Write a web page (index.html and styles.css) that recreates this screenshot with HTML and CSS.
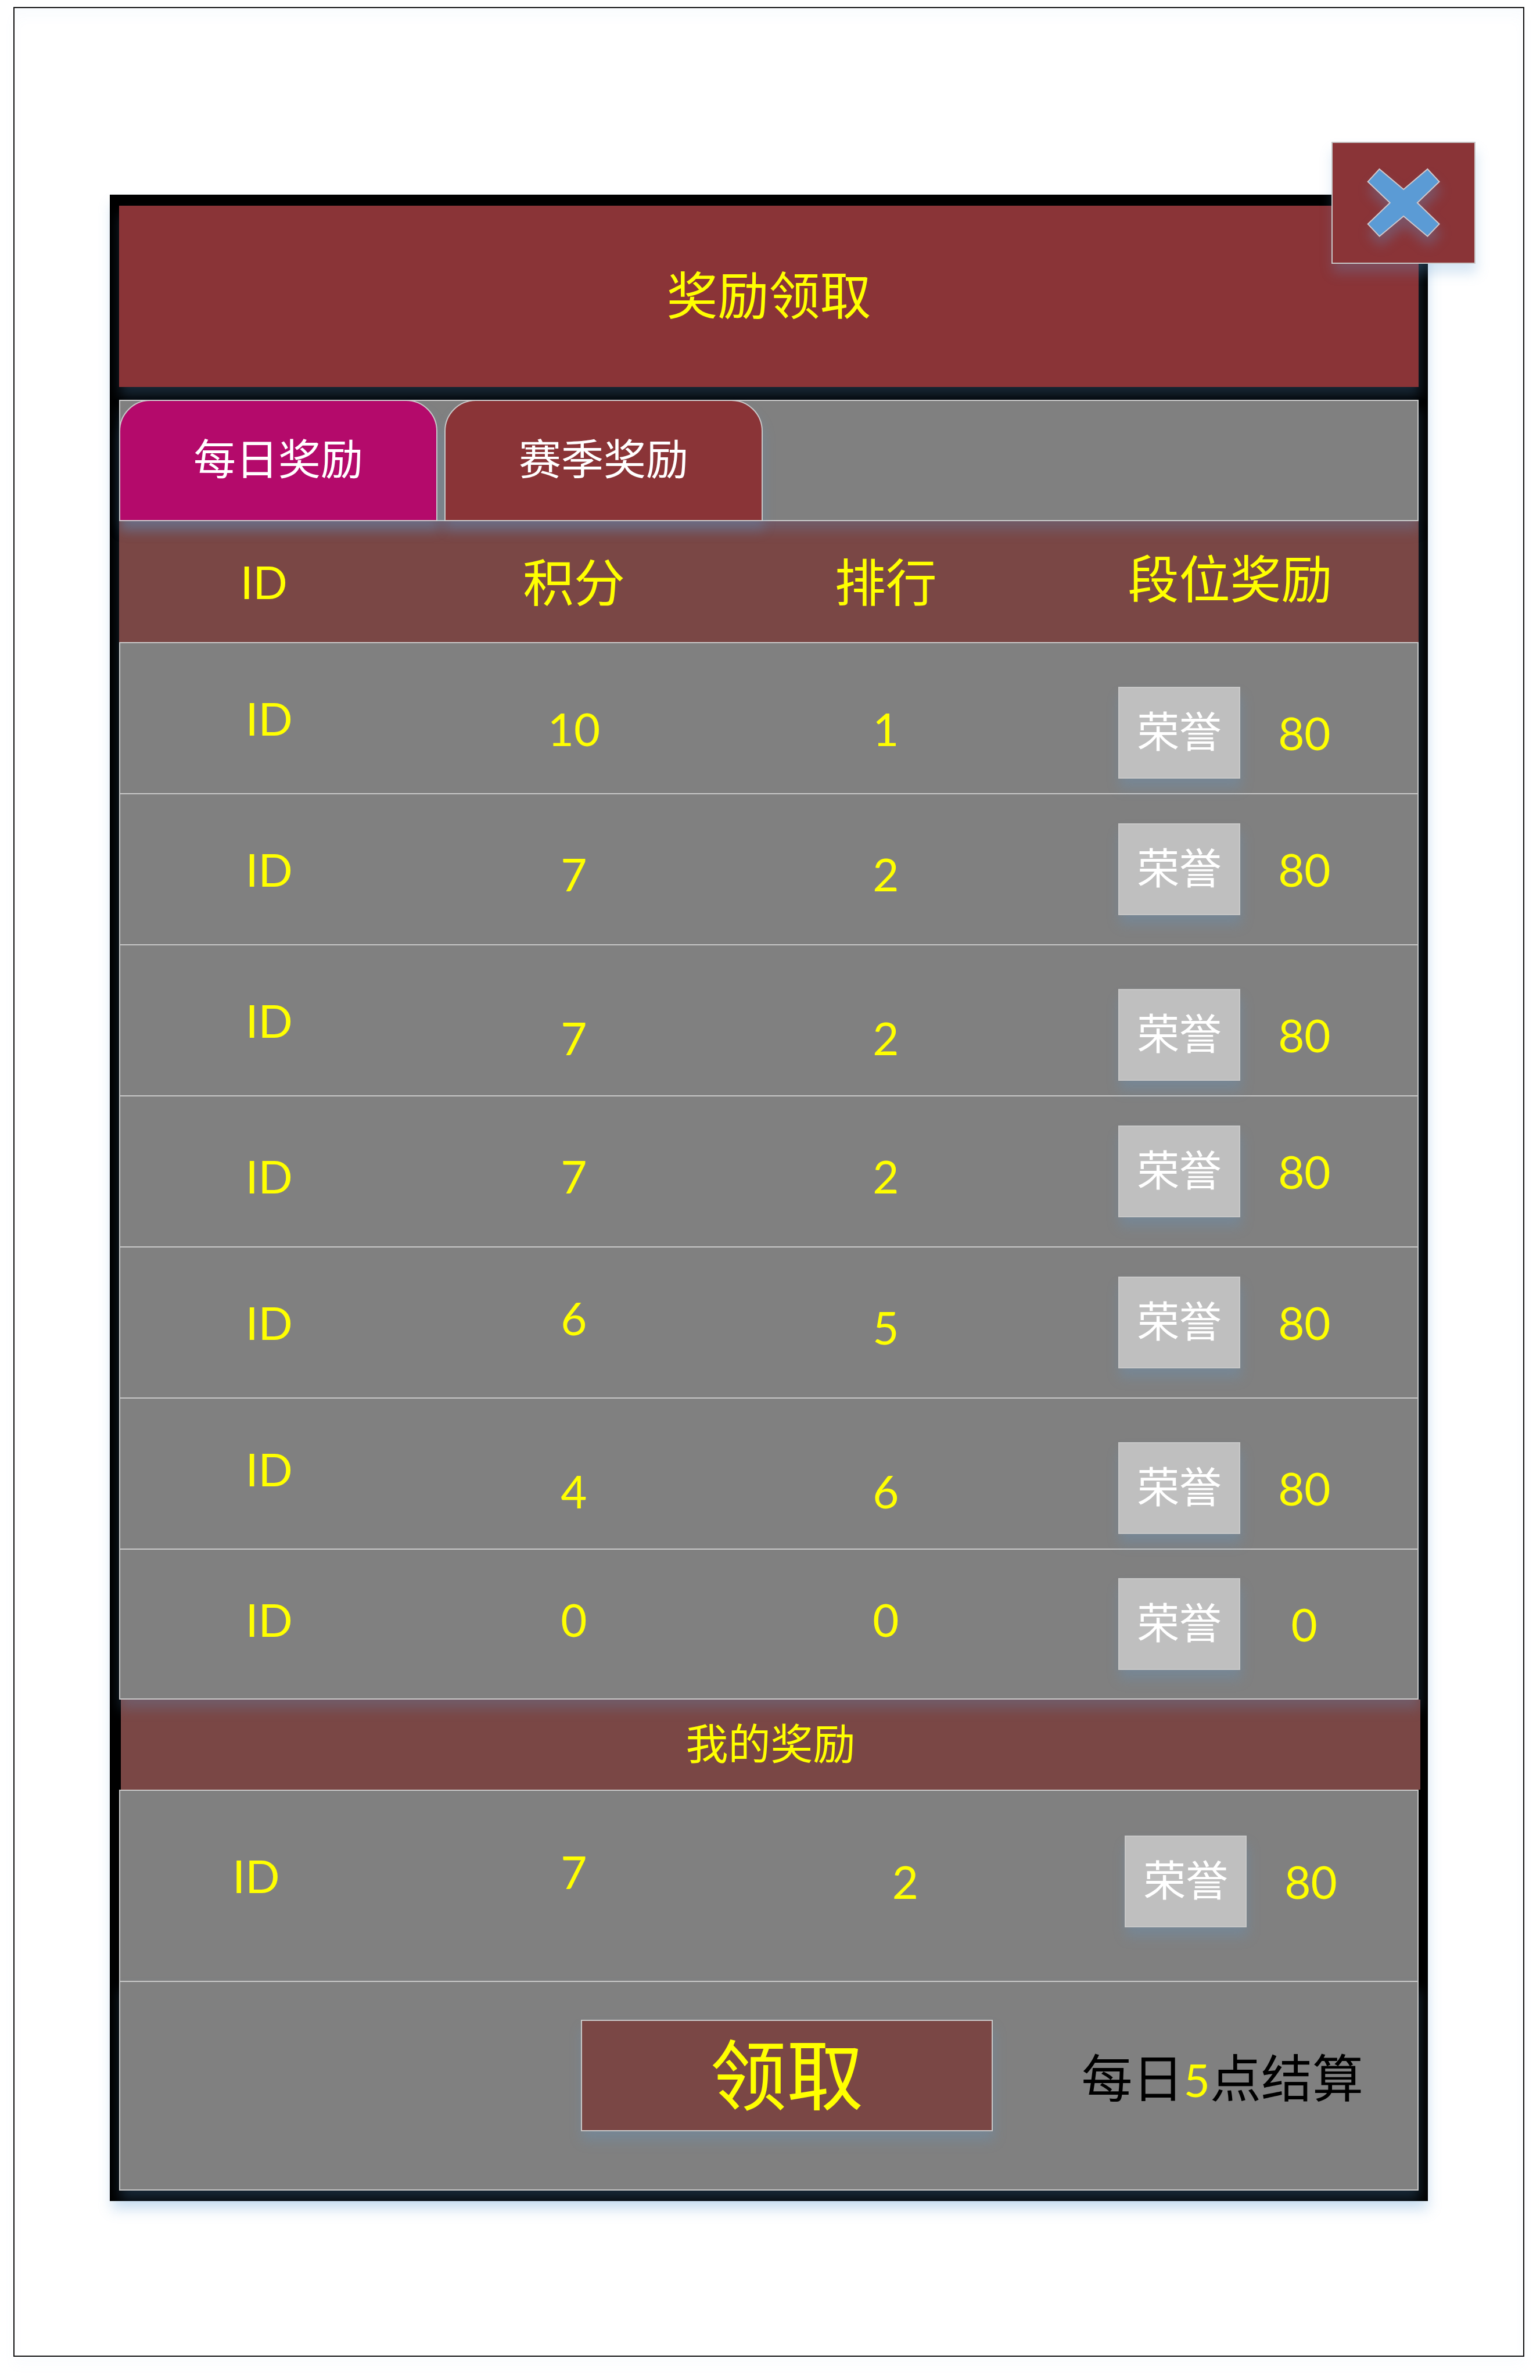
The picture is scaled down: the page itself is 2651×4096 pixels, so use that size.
FILE: index.html
```html
<!DOCTYPE html>
<html lang="zh-CN">
<head>
<meta charset="utf-8">
<title>奖励领取</title>
<link rel="stylesheet" href="styles.css">
</head>
<body>
<main class="page">
  <section class="panel">
    <h1 class="title">奖励领取</h1>
    <button class="close" type="button" aria-label="关闭">
      <svg class="close-icon" viewBox="0 0 845 714" aria-hidden="true">
        <polygon points="279,156 423,277 566,156 636,231 505,357 636,484 566,557 423,437 279,557 210,484 342,357 210,231"/>
      </svg>
    </button>

    <div class="tabs" role="tablist">
      <button class="tab tab-active" type="button" role="tab" aria-selected="true">每日奖励</button>
      <button class="tab" type="button" role="tab" aria-selected="false">赛季奖励</button>
    </div>

    <table class="ranking">
      <colgroup><col class="col-id"><col class="col-score"><col class="col-rank"><col></colgroup>
      <thead>
        <tr><th scope="col">ID</th><th scope="col">积分</th><th scope="col">排行</th><th scope="col">段位奖励</th></tr>
      </thead>
      <tbody>
        <tr>
          <td>ID</td><td class="mid">10</td><td class="mid">1</td>
          <td class="lower"><div class="reward"><span class="badge">荣誉</span><span class="amount">80</span></div></td>
        </tr>
        <tr>
          <td>ID</td><td class="low">7</td><td class="low">2</td>
          <td><div class="reward"><span class="badge">荣誉</span><span class="amount">80</span></div></td>
        </tr>
        <tr>
          <td>ID</td><td class="lowest">7</td><td class="lowest">2</td>
          <td class="lower"><div class="reward"><span class="badge">荣誉</span><span class="amount">80</span></div></td>
        </tr>
        <tr>
          <td class="low">ID</td><td class="low">7</td><td class="low">2</td>
          <td><div class="reward"><span class="badge">荣誉</span><span class="amount">80</span></div></td>
        </tr>
        <tr>
          <td>ID</td><td class="high">6</td><td class="low">5</td>
          <td><div class="reward"><span class="badge">荣誉</span><span class="amount">80</span></div></td>
        </tr>
        <tr>
          <td class="high">ID</td><td class="lowest">4</td><td class="lowest">6</td>
          <td class="lower"><div class="reward"><span class="badge">荣誉</span><span class="amount">80</span></div></td>
        </tr>
        <tr>
          <td class="high">ID</td><td class="high">0</td><td class="high">0</td>
          <td><div class="reward"><span class="badge">荣誉</span><span class="amount">0</span></div></td>
        </tr>
      </tbody>
    </table>

    <h2 class="subtitle">我的奖励</h2>

    <table class="mine">
      <colgroup><col class="col-my-id"><col class="col-my-score"><col class="col-my-rank"><col></colgroup>
      <tbody>
        <tr>
          <td class="higher">ID</td><td class="highest">7</td><td class="high">2</td>
          <td class="high"><div class="reward"><span class="badge">荣誉</span><span class="amount">80</span></div></td>
        </tr>
      </tbody>
    </table>

    <footer class="actions">
      <button class="claim" type="button">领取</button>
      <p class="note">每日<span class="hour">5</span>点结算</p>
    </footer>
  </section>
</main>
</body>
</html>
```
FILE: styles.css
```css
:root {
  --line: #c8c8c8;
  --red: #8a3437;
  --brown: #7a4745;
  --gray: #808080;
  --yellow: #ffff00;
  --shadow: 2px 16px 20px rgba(91, 155, 213, 0.25);
}

* {
  box-sizing: border-box;
}

body {
  margin: 0;
  padding: 12px 27px 39px 23px;
  background: #fff;
  color: var(--yellow);
  font-family: Lato, "Noto Sans CJK SC", sans-serif;
  font-size: 78px;
  line-height: 96px;
}

button {
  margin: 0;
  padding: 0;
  border: 2px solid var(--line);
  font: inherit;
  color: inherit;
  box-shadow: var(--shadow);
}

.page {
  padding: 321px 164px 266px;
  border: 2px solid #111;
  box-shadow: 0 16px 20px rgba(91, 155, 213, 0.03), inset 0 16px 20px rgba(91, 155, 213, 0.03);
}

.panel {
  position: relative;
  padding: 19px 16px 18px;
  background: #000;
  box-shadow: var(--shadow);
}

.title {
  margin: 0 0 22px;
  padding: 105px 0 111px;
  background: var(--red);
  box-shadow: var(--shadow);
  font-size: 88px;
  font-weight: 400;
  text-align: center;
}

.close {
  position: absolute;
  top: -91px;
  right: -82px;
  width: 248px;
  height: 210px;
  background: var(--red);
}

.close-icon {
  display: block;
  width: 100%;
  height: 100%;
  fill: #5b9bd5;
  stroke: #d0c8cc;
  stroke-width: 7;
  filter: drop-shadow(2px 16px 10px rgba(91, 155, 213, 0.3));
}

.tabs {
  position: relative;
  z-index: 2;
  display: flex;
  gap: 12px;
  background: var(--gray);
  box-shadow: inset 0 0 0 2px var(--line), var(--shadow);
}

.tab {
  width: 548px;
  padding: 51px 0 58px;
  border-radius: 54px 54px 0 0;
  background: var(--red);
  color: #fff;
  font-size: 73px;
}

.tab-active {
  background: #b40a6b;
}

table {
  width: 100%;
  table-layout: fixed;
  border-spacing: 0;
  text-align: center;
}

.ranking {
  position: relative;
  z-index: 1;
  background: var(--gray);
  box-shadow: var(--shadow);
}

.col-id { width: 23%; }
.col-score { width: 24%; }
.col-rank { width: 24%; }
.col-my-id { width: 21%; }
.col-my-score { width: 28%; }
.col-my-rank { width: 23%; }

th {
  height: 208px;
  padding: 0;
  background: var(--brown);
  font-size: 88px;
  font-weight: 400;
}

th:first-child {
  padding-right: 16px;
  font-size: 78px;
}

th:last-child {
  padding-bottom: 12px;
}

td {
  height: 260px;
  padding: 0;
  border-top: 2px solid var(--line);
}

td:first-child {
  border-left: 2px solid var(--line);
}

td:last-child {
  padding-right: 18px;
  border-right: 2px solid var(--line);
}

.ranking tr:last-child td {
  border-bottom: 2px solid var(--line);
}

.low { padding-top: 16px; }
.mid { padding-top: 36px; }
.lower { padding-top: 50px; }
.lowest { padding-top: 60px; }
.high { padding-bottom: 16px; }
.higher { padding-bottom: 36px; }
.highest { padding-bottom: 50px; }

.reward {
  display: flex;
  justify-content: center;
  align-items: center;
  gap: 65px;
}

.badge {
  width: 210px;
  padding: 26px 0 32px;
  border: 2px solid var(--line);
  background: #bfbfbf;
  box-shadow: var(--shadow);
  color: #fff;
  font-size: 73px;
}

.amount {
  width: 90px;
}

.subtitle {
  margin: 0 -3px 0 3px;
  padding: 27px 0 32px;
  background: var(--brown);
  font-size: 73px;
  font-weight: 400;
  text-align: center;
}

.mine {
  background: var(--gray);
}

.mine td {
  height: 329px;
}

.actions {
  display: grid;
  grid-template-columns: 709fr 732fr;
  align-items: center;
  padding: 65px 0 100px 793px;
  border: 2px solid var(--line);
  background: var(--gray);
  box-shadow: var(--shadow);
}

.claim {
  padding: 28px 0 32px;
  background: var(--brown);
  font-size: 132px;
  line-height: 128px;
}

.note {
  margin: 0;
  padding: 10px 0 0 60px;
  color: #000;
  font-size: 88px;
  text-align: center;
}

.hour {
  color: var(--yellow);
  font-size: 78px;
}
```
